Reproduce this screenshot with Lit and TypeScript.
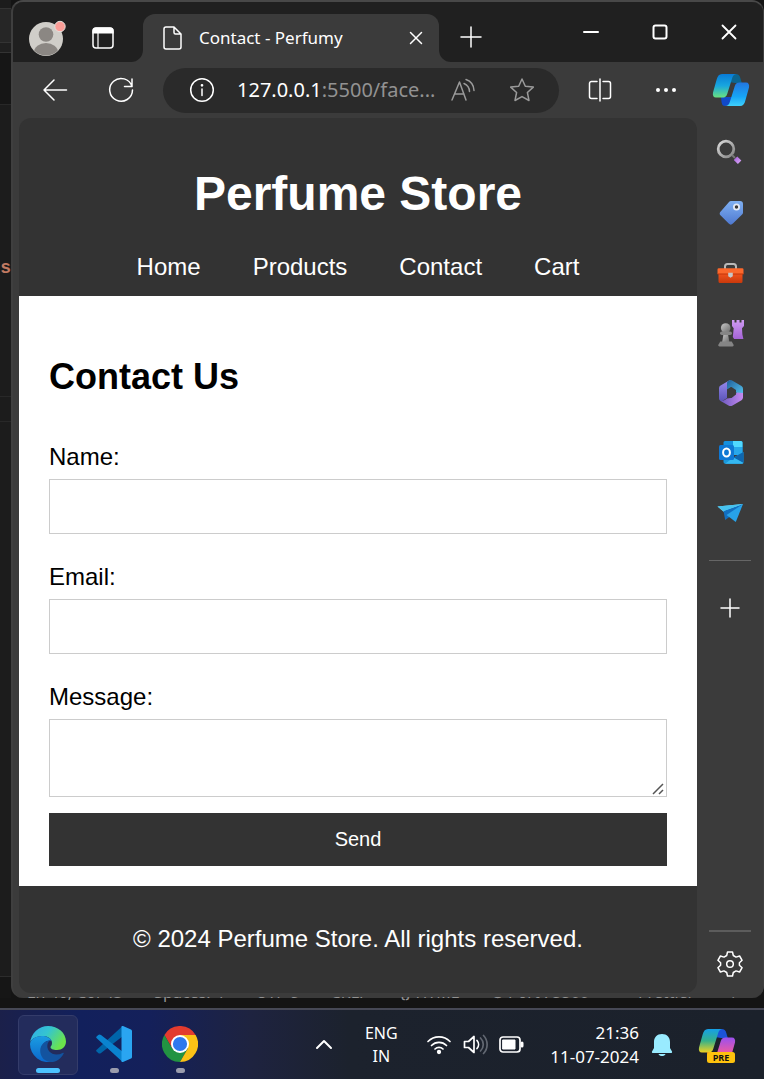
import { LitElement, html, css, svg } from "lit";
import { customElement, state } from "lit/decorators.js";

const stroke = (size: number, body: unknown, width = 1.5) => html`
  <svg width=${size} height=${size} viewBox="0 0 ${size} ${size}" fill="none" stroke="currentColor"
    stroke-width=${width} stroke-linecap="round" stroke-linejoin="round" aria-hidden="true">${body}</svg>`;

const art = (size: number, body: unknown) => html`
  <svg width=${size} height=${size} viewBox="0 0 ${size} ${size}" aria-hidden="true">${body}</svg>`;

const plus = stroke(22, svg`<path d="M11 1v20M1 11h20"/>`);

const sideApps = [
  { name: "Search", icon: art(28, svg`
    <defs><linearGradient id="lens" x1="0" y1="0" x2="1" y2="1"><stop offset="0" stop-color="#d9d9d9"/><stop offset="1" stop-color="#858585"/></linearGradient>
    <linearGradient id="handle" x1="0" y1="0" x2="1" y2="1"><stop offset="0" stop-color="#b26ee2"/><stop offset="1" stop-color="#cf9bf2"/></linearGradient></defs>
    <circle cx="10" cy="10" r="7.8" fill="none" stroke="url(#lens)" stroke-width="2.8"/>
    <path d="M16 16l3 3" stroke="#777" stroke-width="2"/>
    <path d="M19.5 19.2l4.1 4" stroke="url(#handle)" stroke-width="5"/>`) },
  { name: "Shopping", icon: art(28, svg`
    <defs><linearGradient id="tag" x1="0" y1="0" x2="0" y2="1"><stop offset="0" stop-color="#7fb0f2"/><stop offset="1" stop-color="#4f79d0"/></linearGradient></defs>
    <path d="M15 2h9a3 3 0 0 1 3 3v8.500a3 3 0 0 1-.9 2.100l-9.200 9a3 3 0 0 1-4.200 0l-8-8a3 3 0 0 1 0-4.200l8.300-9.500A3 3 0 0 1 15 2z" fill="url(#tag)"/>
    <circle cx="20.500" cy="8" r="2.600" fill="#3a3a3a" stroke="#e4eaf5" stroke-width="1.800"/>`) },
  { name: "Tools", icon: art(28, svg`
    <defs><linearGradient id="toolbox" x1="0" y1="0" x2="0" y2="1"><stop offset="0" stop-color="#f3541d"/><stop offset="1" stop-color="#c9390c"/></linearGradient></defs>
    <path d="M9 10V7.500A2.500 2.500 0 0 1 11.500 5h6A2.500 2.500 0 0 1 20 7.500V10" fill="none" stroke="#b9b9b9" stroke-width="2"/>
    <path d="M2.500 14h24v8.500a1.500 1.500 0 0 1-1.500 1.500H4a1.500 1.500 0 0 1-1.500-1.500z" fill="url(#toolbox)"/>
    <path d="M1.500 10.500a1.300 1.300 0 0 1 1.300-1.300h23.400a1.300 1.300 0 0 1 1.300 1.300V15h-26z" fill="#fb682c"/>
    <path d="M1.500 14.500h26v1h-26z" fill="#c33409"/>
    <path d="M12.200 13.800h4.600v3.400l-2.300 1.600-2.300-1.600z" fill="#c6c6c6"/>`) },
  { name: "Games", icon: art(28, svg`
    <defs><linearGradient id="pawn" x1="0" y1="0" x2="1" y2="1"><stop offset="0" stop-color="#c8c8c8"/><stop offset="1" stop-color="#686868"/></linearGradient>
    <linearGradient id="rook" x1="0" y1="0" x2="0" y2="1"><stop offset="0" stop-color="#cf9bf2"/><stop offset="1" stop-color="#a463d6"/></linearGradient></defs>
    <path d="M16 1h2.500v2.500h2V1h3v2.500h2V1H28v6l-2 2.200.4 6.300 1 4.500h-9.300l-1.300-2 .9-8.800L16 7z" fill="url(#rook)"/>
    <circle cx="9.700" cy="9" r="4.800" fill="url(#pawn)"/>
    <path d="M7.500 15h4.500l1.500 9H6z" fill="url(#pawn)"/>
    <rect x="4" y="12.500" width="12" height="3.600" rx="1.800" fill="#858585"/>
    <path d="M4.300 22.500h11.400l2 3.500a1.400 1.400 0 0 1-1.200 1.500h-13A1.400 1.400 0 0 1 2.200 26z" fill="#858585"/>`) },
  { name: "Microsoft 365", icon: art(28, svg`
    <defs><linearGradient id="m365l" x1="0" y1="0" x2="0" y2="1"><stop offset="0" stop-color="#9a8bf0"/><stop offset="1" stop-color="#5b55b8"/></linearGradient>
    <linearGradient id="m365t" x1="0" y1="0" x2="1" y2="1"><stop offset="0" stop-color="#1f5f9a"/><stop offset="1" stop-color="#5accf6"/></linearGradient>
    <linearGradient id="m365b" x1="0" y1="0" x2="1" y2="0"><stop offset="0" stop-color="#6a58bd"/><stop offset="1" stop-color="#c58af0"/></linearGradient></defs>
    <path d="M14 1l-9 5.300a3 3 0 0 0-2 2.600v10.600a2.500 2.500 0 0 0 3.800 2.200L11 19V10z" fill="url(#m365l)"/>
    <path d="M12.500 1.700a4 4 0 0 1 4 0l9 5.300a3.400 3.400 0 0 1 1.500 3v8.500l-7.500-5.500-4.500-5L11 10.500V4c0-1 .6-1.800 1.500-2.300z" fill="url(#m365t)"/>
    <path d="M27 14v4.500a3.400 3.400 0 0 1-1.500 2.700l-9 5.300a4 4 0 0 1-4 0l-8.300-4.800c2.500.6 4.300-.4 6.800-2.200l4-.5 6-5.500z" fill="url(#m365b)"/>
    <path d="M11 11l4.500-3 4.500 3v4.500L15.500 19 11 16.800z" fill="#3b3b3b"/>`) },
  { name: "Outlook", icon: art(28, svg`
    <path d="M9 2h16a1.500 1.500 0 0 1 1.500 1.500V16H7.500V3.500A1.500 1.500 0 0 1 9 2z" fill="#1490df"/>
    <path d="M17 2h8a1.500 1.500 0 0 1 1.500 1.500V8H17z" fill="#50d9ff"/>
    <path d="M7.500 8H17v8H7.500z" fill="#0a64ad"/><path d="M17 8h9.500v8H17z" fill="#28a8ea"/>
    <path d="M7.500 14l10 4.500 10-5.500v10a1.800 1.800 0 0 1-1.800 1.800H9.300A1.800 1.800 0 0 1 7.500 23z" fill="#1998dc"/>
    <path d="M17.500 18.500l10-5.500v11z" fill="#0f66ae"/>
    <path d="M9 24.800l8.500-6.300 10 5.500a1.800 1.800 0 0 1-1.800.8z" fill="#35b8f1"/>
    <rect x="3" y="6" width="15" height="15" rx="1.500" fill="#0f78d4"/>
    <ellipse cx="10.500" cy="13.500" rx="3.400" ry="4" fill="none" stroke="#fff" stroke-width="2"/>`) },
  { name: "Drop", icon: art(28, svg`
    <path d="M1.500 7.500L27 5l-9.500 8-8.500 1z" fill="#6cd7f9"/>
    <path d="M27 5L7.500 12l1.700 9 4.800-3.500z" fill="#126fc0"/>
    <path d="M1.500 7.500L27 5 7.500 12z" fill="#47c2ef"/>
    <path d="M27 5l-7.200 18L10.500 16z" fill="#27a2e8"/>`) },
];

@customElement("app-root")
export class AppRoot extends LitElement {
  @state() private nav = ["Home", "Products", "Contact", "Cart"];

  static styles = css`
    :host { display: block; background: #141414; color: #fff; font-family: "Noto Sans", "Open Sans", sans-serif; }
    * { box-sizing: border-box; }
    button { border: 0; padding: 0; background: none; color: inherit; font: inherit; }
    svg { display: block; flex: none; }
    .desktop { display: flex; flex-direction: column; min-height: 100vh; }
    .stage { flex: 1; display: flex; }

    .editor { width: 11px; flex: none; display: flex; flex-direction: column; background: #1c1c1c; }
    .strip { border-bottom: 1px solid #333; }
    .strip-top { height: 9px; background: #1c1c1c; }
    .strip-tabs { height: 34px; background: #262626; }
    .strip-path { height: 10px; background: #1f1f1f; }
    .strip-panel { height: 52px; background: #161616; border-color: #282828; }
    .strip-code { height: 292px; padding-top: 153px; border-color: #282828; color: #c17a62; font: bold 18px/20px "Liberation Mono", monospace; text-align: right; }
    .strip-line { height: 25px; border-color: #282828; }
    .strip-rest { flex: 1; }
    .strip-foot { height: 22px; border-top: 1px solid #2c2c2c; background: #161616; }

    .window { flex: 1; min-width: 0; display: flex; flex-direction: column; background: #3b3b3b; border-top: 2px solid #484848; border-left: 2px solid #3f3f3f; border-right: 1px solid #3f3f3f; border-radius: 12px; overflow: hidden; }
    .titlebar { height: 60px; flex: none; display: flex; background: #202020; }
    .tools-back { flex: none; display: flex; background: #3b3b3b; }
    .title-tools { width: 130px; display: flex; align-items: center; gap: 26px; padding: 12px 0 0 15px; border-radius: 0 0 12px 0; background: #202020; }
    .tab-back { display: flex; flex: 0 1 296px; min-width: 180px; }
    .tab { flex: 1; min-width: 0; display: flex; align-items: center; margin-top: 12px; padding: 0 16px 0 18px; background: #3b3b3b; border-radius: 12px 12px 0 0; }
    .tab-title { flex: 1; min-width: 0; margin-left: 14px; font-size: 17px; line-height: 24px; white-space: nowrap; }
    .after-back { flex: 1; background: #3b3b3b; display: flex; }
    .after { flex: 1; display: flex; background: #202020; border-radius: 0 0 0 12px; }
    .new-tab { width: 64px; padding-top: 10px; display: grid; place-items: center; }
    .controls { margin-left: auto; display: flex; }
    .controls button { width: 69px; display: grid; place-items: center; }

    .toolbar { height: 56px; flex: none; display: flex; align-items: center; }
    .tool { width: 66px; height: 45px; flex: none; display: grid; place-items: center; }
    .lead { margin-left: 9px; }
    .copilot { width: 64px; }
    .address { flex: 1; min-width: 0; height: 45px; margin: 0 8px 0 9px; padding: 0 24px 0 26px; display: flex; align-items: center; background: #2a2a2a; border-radius: 23px; }
    .url { flex: 1; min-width: 0; margin-left: 22px; overflow: hidden; white-space: nowrap; text-align: left; font-size: 20px; line-height: 28px; color: #929292; }
    .host { color: #fff; }
    .dim { color: #9a9a9a; }
    .address-tools { display: flex; align-items: center; gap: 34px; }

    .body { flex: 1; display: flex; }
    .page { flex: 1; min-width: 0; display: flex; flex-direction: column; margin: 0 0 5px 6px; border-radius: 12px; overflow: hidden; background: #333; color: #000; font: 24px/27px "Liberation Sans", Arial, sans-serif; }
    .store-head { padding: 48px 16px 16px; color: #fff; text-align: center; }
    h1 { margin: 0 0 32px; font-size: 48px; line-height: 55px; }
    .nav { display: flex; justify-content: center; gap: 52px; }
    .nav a { color: #fff; text-decoration: none; }
    .main { flex: 1; padding: 60px 30px 20px; background: #fff; }
    h2 { margin: 0 0 46px; font-size: 36px; line-height: 41px; }
    .form { display: flex; flex-direction: column; }
    label { margin-bottom: 9px; }
    input, textarea { display: block; width: 100%; padding: 15px; border: 1px solid #ccc; border-radius: 0; background: #fff; font: 20px/23px "Liberation Sans", Arial, sans-serif; }
    input { height: 55px; margin-bottom: 29px; }
    textarea { height: 78px; margin-bottom: 16px; resize: none; background: #fff url("data:image/svg+xml,%3Csvg xmlns='http://www.w3.org/2000/svg' width='12' height='12'%3E%3Cpath d='M1 11L11 1M7 11l4-4' stroke='%23555' stroke-width='1.5'/%3E%3C/svg%3E") no-repeat right 2px bottom 1px; }
    .send { height: 53px; background: #333; color: #fff; font-size: 20px; line-height: 23px; }
    .store-foot { padding: 39px 16px 41px; color: #fff; text-align: center; }

    .rail { width: 66px; flex: none; display: flex; flex-direction: column; padding: 5px 0 4px; }
    .rail button { height: 60px; display: grid; place-items: center; }
    .rule { height: 1px; margin: 17px 12px; background: #666; }
    .rule-end { height: 2px; margin: auto 12px 2px; background: #5c5c5c; }

    .status { height: 11px; margin-top: -1px; flex: none; position: relative; display: flex; align-items: flex-end; justify-content: space-between; padding: 0 24px 6px 27px; overflow: hidden; color: #929292; font-size: 16px; line-height: 20px; white-space: nowrap; }

    .taskbar { height: 71px; flex: none; display: flex; align-items: center; padding: 0 28px 0 18px; border-top: 2px solid #464855; background: linear-gradient(90deg, #1b204a 0, #12205c 80px, #14205a 150px, #1e2340 250px, #1c222d 350px, #1b212b 100%); }
    .apps { display: flex; gap: 6px; }
    .app { width: 60px; height: 60px; display: flex; flex-direction: column; align-items: center; padding: 11px 0 2px; border-radius: 6px; }
    .active { background: #232c5c; border: 1px solid #343c6a; padding: 10px 0 1px; }
    .mark { width: 9px; height: 5px; margin-top: auto; border-radius: 3px; background: #9a9cad; }
    .active .mark { width: 24px; background: #4cc2ff; }
    .tray { margin-left: auto; display: flex; align-items: center; font-size: 16px; line-height: 23px; }
    .lang { width: 60px; margin: 0 15px 0 18px; text-align: center; }
    .status-icons { display: flex; align-items: center; gap: 11px; }
    .clock { margin: 0 12px 0 25px; font-size: 17px; line-height: 24px; text-align: right; }
    .bell { margin-right: 25px; }
    .pre { font: bold 9px/10px "Open Sans", sans-serif; }
  `;

  render() {
    return html`
      <div class="desktop">
        <div class="stage">
          <div class="editor">
            <div class="strip strip-top"></div><div class="strip strip-tabs"></div>
            <div class="strip strip-path"></div><div class="strip strip-panel"></div>
            <div class="strip strip-code">s</div><div class="strip strip-line"></div>
            <div class="strip-rest"></div><div class="strip-foot"></div>
          </div>
          <section class="window">
            ${this.titlebar()} ${this.toolbar()}
            <div class="body">${this.page()} ${this.rail()}</div>
          </section>
        </div>
        <div class="status">
          <span>Ln 46, Col 43</span><span>Spaces: 4</span><span>UTF-8</span><span>CRLF</span>
          <span>{} HTML</span><span>⊘ Port : 5500</span><span>✓ Prettier</span><span>♤</span>
        </div>
        ${this.taskbar()}
      </div>`;
  }

  private titlebar() {
    return html`
      <div class="titlebar">
        <div class="tools-back"><div class="title-tools">
          <button aria-label="Profile">${art(38, svg`
            <defs><clipPath id="avatar"><circle cx="18" cy="20" r="16.500"/></clipPath></defs>
            <circle cx="18" cy="20" r="17" fill="#d0cec9"/>
            <g clip-path="url(#avatar)" fill="#8b8783"><circle cx="18" cy="15.500" r="7.300"/><ellipse cx="18" cy="33" rx="12" ry="9"/></g>
            <circle cx="32" cy="7.500" r="5.200" fill="#fb9d97" stroke="#e4e0dc" stroke-width="1"/>`)}</button>
          <button aria-label="Tab actions">${art(22, svg`
            <rect x="1" y="1" width="20" height="20" rx="3" fill="none" stroke="#fff" stroke-width="1.500"/>
            <path d="M1 6V4a3 3 0 0 1 3-3h14a3 3 0 0 1 3 3v2zM6 6v15" fill="#fff" stroke="#fff" stroke-width="1.200"/>`)}</button>
        </div></div>
        <div class="tab-back"><div class="tab">
          ${stroke(24, svg`<path d="M5 1h8l7 7v13a2 2 0 0 1-2 2H5a2 2 0 0 1-2-2V3a2 2 0 0 1 2-2zM13 1v5.500a1.500 1.500 0 0 0 1.500 1.500H20"/>`)}
          <span class="tab-title">Contact - Perfumy</span>
          <button aria-label="Close tab">${stroke(14, svg`<path d="M1.500 1.500l11 11M12.500 1.500l-11 11"/>`)}</button>
        </div></div>
        <div class="after-back"><div class="after">
          <button class="new-tab" aria-label="New tab">${plus}</button>
          <div class="controls">
            <button aria-label="Minimize">${stroke(16, svg`<path d="M1 8h14"/>`, 2)}</button>
            <button aria-label="Maximize">${stroke(16, svg`<rect x="1.500" y="1.500" width="13" height="13" rx="2"/>`, 2)}</button>
            <button aria-label="Close">${stroke(16, svg`<path d="M1.500 1.500l13 13M14.500 1.500l-13 13"/>`, 1.8)}</button>
          </div>
        </div></div>
      </div>`;
  }

  private toolbar() {
    return html`
      <div class="toolbar">
        <button class="tool lead" aria-label="Back">${stroke(26, svg`<path d="M24.500 13H2M12 3L2 13l10 10"/>`)}</button>
        <button class="tool" aria-label="Reload">${stroke(26, svg`<path d="M24 9.500A11.400 11.400 0 1 0 24.500 13M24 2v7.500h-7.500"/>`)}</button>
        <div class="address">
          ${stroke(26, svg`<circle cx="13" cy="13" r="11.300"/><path d="M13 12v6.500"/><circle cx="13" cy="8.300" r=".6" fill="currentColor"/>`)}
          <button class="url" aria-label="Address"><span class="host">127.0.0.1</span>:5500/face...</button>
          <div class="address-tools dim">
            ${stroke(24, svg`<path d="M1 22L8.500 4 15 22M3.800 16h9.200M13 5.500a9 9 0 0 1 5.500 8M15 1.500a12 12 0 0 1 8 11"/>`)}
            ${stroke(26, svg`<path d="M13 2l3.300 7.200 8 .9-5.900 5.400 1.600 8L13 19.600 6 23.500l1.600-8-5.900-5.400 8-.9z"/>`)}
          </div>
        </div>
        <button class="tool" aria-label="Split screen">${stroke(24, svg`<path d="M12 1v22M9 3.500H3.500a2 2 0 0 0-2 2v13a2 2 0 0 0 2 2H9M15 3.500h5.500a2 2 0 0 1 2 2v13a2 2 0 0 1-2 2H15"/>`)}</button>
        <button class="tool" aria-label="Settings and more">${art(24, svg`<g fill="#fff"><circle cx="4" cy="12" r="2"/><circle cx="12" cy="12" r="2"/><circle cx="20" cy="12" r="2"/></g>`)}</button>
        <button class="tool copilot" aria-label="Copilot">${this.copilot("toolbar", ["#087bd8", "#18a6df", "#6be27e"], ["#2376df", "#16a5f7", "#3fd0fb"], "#1149c9")}</button>
      </div>`;
  }

  private copilot(id: string, a: string[], b: string[], fold: string, pre = false) {
    return art(38, svg`
      <defs>
        <linearGradient id="${id}-left" x1="0" y1="0" x2="0" y2="1"><stop offset="0" stop-color=${a[0]}/><stop offset=".5" stop-color=${a[1]}/><stop offset="1" stop-color=${a[2]}/></linearGradient>
        <linearGradient id="${id}-right" x1="0" y1="0" x2="0" y2="1"><stop offset="0" stop-color=${b[0]}/><stop offset=".6" stop-color=${b[1]}/><stop offset="1" stop-color=${b[2]}/></linearGradient>
      </defs>
      <path d="M18 3h5.500c3 0 4 1.500 4.800 4l1.500 5H23l-6-1z" fill=${pre ? "#1b53d8" : "#0c6590"}/>
      <path d="M9 26h13l-4 6c-1 1.800-2.500 3-5 3-2.200 0-2.800-1-3.500-4z" fill=${fold}/>
      <path d="M10 3h15c-2.600 0-4 1.500-4.800 4l-5 16c-.9 2.700-2.300 3.600-4.600 3.600H4c-2.500 0-3.600-1.900-3-5L4.500 9C5.500 5 7 3 10 3z" fill="url(#${id}-left)"/>
      <path d="M27.500 11.500H34c2.500 0 3.600 2 3 5L33.500 29c-1 4-2.500 6-5.500 6H13c2.600 0 4-1.500 4.800-4l5-16c.9-2.700 2.300-3.500 4.700-3.500z" fill="url(#${id}-right)"/>
      ${pre ? svg`<rect x="9" y="26" width="28" height="11" rx="2.500" fill="#fec20d"/><text class="pre" x="23" y="35" text-anchor="middle" fill="#111">PRE</text>` : ""}`);
  }

  private page() {
    return html`
      <div class="page">
        <header class="store-head">
          <h1>Perfume Store</h1>
          <nav class="nav">${this.nav.map((n) => html`<a href="#">${n}</a>`)}</nav>
        </header>
        <main class="main">
          <h2>Contact Us</h2>
          <form class="form">
            <label for="name">Name:</label><input id="name" type="text">
            <label for="email">Email:</label><input id="email" type="email">
            <label for="message">Message:</label><textarea id="message"></textarea>
            <button class="send" type="button">Send</button>
          </form>
        </main>
        <footer class="store-foot">© 2024 Perfume Store. All rights reserved.</footer>
      </div>`;
  }

  private rail() {
    return html`
      <aside class="rail">
        ${sideApps.map((a) => html`<button aria-label=${a.name}>${a.icon}</button>`)}
        <div class="rule"></div>
        <button aria-label="Customize">${stroke(20, svg`<path d="M10 1v18M1 10h18"/>`)}</button>
        <div class="rule-end"></div>
        <button aria-label="Settings">${stroke(28, svg`
          <circle cx="14" cy="14" r="3.300"/>
          <path d="M11.500 2h5l.8 3.500 2.700 1.600 3.600-1.100 2.500 4.300-2.700 2.500v2.400l2.700 2.500-2.500 4.300-3.600-1.100-2.700 1.600-.8 3.500h-5l-.8-3.500L8 20.900 4.400 22l-2.500-4.300 2.700-2.500v-2.400l-2.700-2.500L4.400 6 8 7.100l2.700-1.600z"/>`)}</button>
      </aside>`;
  }

  private taskbar() {
    return html`
      <div class="taskbar">
        <div class="apps">
          <button class="app active" aria-label="Edge">${art(36, svg`
            <defs>
              <linearGradient id="edge-top" x1="0" y1="0" x2="1" y2=".5"><stop offset="0" stop-color="#2fa9ec"/><stop offset=".5" stop-color="#35c5cf"/><stop offset="1" stop-color="#6be34b"/></linearGradient>
              <linearGradient id="edge-side" x1="0" y1="0" x2="0" y2="1"><stop offset="0" stop-color="#1b9de2"/><stop offset="1" stop-color="#0b67cb"/></linearGradient>
            </defs>
            <path d="M0 17C1 7 9 0 18 0c10 0 18 7 18 15.500 0 5-4 8.500-9 8.500-4 0-6.500-1.200-6.500-2.700 0-1 1.500-1.600 1.500-4.300 0-4-4-7-9-7C6 10 1 13 0 17z" fill="url(#edge-top)"/>
            <path d="M0 18C.5 13 6 10 12 10c4.500 0 8.500 2 9.700 5-3-1.600-10 1-10 8.500C11.700 30 17 35 23 35.300A18 18 0 0 1 0 18z" fill="url(#edge-side)"/>
            <path d="M21 14.300c-5 0-10.800 4-10.800 10.500C10.200 31 15 36 21 36c5.500 0 10-3.500 12.600-8.300.4-.8-.4-1.200-1-.8A13 13 0 0 1 26.500 28.500c-6 0-9.200-4.500-9.200-8.500 0-3 1.500-5 3.700-5.700z" fill="#13539f"/>`)}<span class="mark"></span></button>
          <button class="app" aria-label="Visual Studio Code">${art(36, svg`
            <path d="M1 23.500L25.500 1 27 0v10L5 27c-1 .8-2 .7-2.800 0L.6 25.500c-.7-.6-.6-1.400.4-2z" fill="#0065a9"/>
            <path d="M1 12.500L25.500 35l1.500 1V26L5 9c-1-.8-2-.7-2.800 0L.6 10.500c-.7.6-.6 1.400.4 2z" fill="#0a83cf"/>
            <path d="M27 0l8 3.500c.7.300 1 .9 1 1.600v25.800c0 .7-.3 1.300-1 1.600L27 36c-.8.300-1.500 0-1.500-1V1c0-1 .7-1.300 1.500-1z" fill="#2aa5f1"/>`)}<span class="mark"></span></button>
          <button class="app" aria-label="Chrome">${art(36, svg`
            <path d="M2.400 9A18 18 0 0 1 33.600 9H18l-7.800 13.500z" fill="#e33b2e"/>
            <path d="M2.400 9A18 18 0 0 0 18 36l7.800-13.500H10.200z" fill="#229342"/>
            <path d="M33.600 9A18 18 0 0 1 18 36l7.800-13.500L18 9z" fill="#fbc116"/>
            <circle cx="18" cy="18" r="9" fill="#fff"/><circle cx="18" cy="18" r="7.100" fill="#2f78ee"/>`)}<span class="mark"></span></button>
        </div>
        <div class="tray">
          <button aria-label="Show hidden icons">${stroke(18, svg`<path d="M2 12l7-7 7 7"/>`, 2)}</button>
          <div class="lang">ENG<br>IN</div>
          <div class="status-icons">
            ${stroke(26, svg`<path d="M2 9.500a15.500 15.500 0 0 1 22 0M5.500 13.500a10.600 10.600 0 0 1 15 0M9 17a5.700 5.700 0 0 1 8 0"/><circle cx="13" cy="20" r="1.300" fill="currentColor"/>`, 1.7)}
            ${stroke(25, svg`<path d="M1.500 9.500h4L11 4.500v16l-5.500-5h-4zM14 8.500a6 6 0 0 1 0 8"/><path d="M17.500 6a9 9 0 0 1 0 13M20.500 3.500a13 13 0 0 1 0 18" stroke="#626872"/>`, 1.7)}
            ${stroke(26, svg`<rect x="1" y="5" width="20" height="15" rx="3"/><rect x="4" y="8" width="12" height="9" fill="currentColor" stroke-width="1"/><path d="M23 11v3" stroke-width="3"/>`, 1.7)}
          </div>
          <div class="clock">21:36<br>11-07-2024</div>
          <div class="bell">${art(22, svg`<path d="M11 0c5 0 8 3.500 8 8v6l2 3.500c.3.800 0 1.500-1 1.500H2c-1 0-1.300-.7-1-1.500L3 14V8c0-4.500 3-8 8-8zM7.500 20h7c-.5 1.500-2 2-3.500 2s-3-.5-3.500-2z" fill="#99ebff"/>`)}</div>
          <button aria-label="Copilot preview">${this.copilot("preview", ["#159fe8", "#35b18a", "#f2d21f"], ["#9a50f0", "#e65aa8", "#fb6a5d"], "#e8622c", true)}</button>
        </div>
      </div>`;
  }
}
